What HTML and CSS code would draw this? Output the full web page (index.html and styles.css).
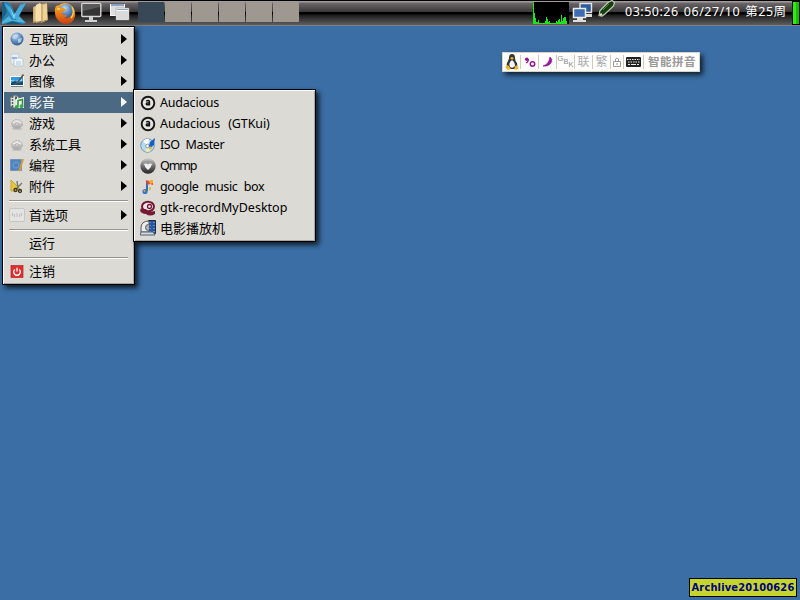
FILE: index.html
```
<!DOCTYPE html>
<html lang="zh-CN">
<head>
<meta charset="utf-8">
<title>Archlive</title>
<link rel="stylesheet" href="styles.css">
</head>
<body>
<svg width="0" height="0" class="defs">
  <defs>
    <linearGradient id="folder" x1="0" x2="1"><stop offset="0" stop-color="#c9a05d"/><stop offset=".5" stop-color="#f4dca8"/><stop offset="1" stop-color="#d2ab6b"/></linearGradient>
    <radialGradient id="globe" cx=".4" cy=".3" r=".8"><stop offset="0" stop-color="#c4dcf4"/><stop offset=".5" stop-color="#5f8dc0"/><stop offset="1" stop-color="#254d82"/></radialGradient>
    <linearGradient id="fox" x1="0" y1="0" x2="0" y2="1"><stop offset="0" stop-color="#f5b227"/><stop offset=".5" stop-color="#ea7418"/><stop offset="1" stop-color="#c23f12"/></linearGradient>
    <linearGradient id="ball" x1="0" y1="0" x2="0" y2="1"><stop offset="0" stop-color="#ccc"/><stop offset=".45" stop-color="#777"/><stop offset="1" stop-color="#222"/></linearGradient>
    <linearGradient id="steel" x1="0" y1="0" x2="0" y2="1"><stop offset="0" stop-color="#e2e2e0"/><stop offset="1" stop-color="#a4a4a2"/></linearGradient>
    <symbol id="gear" viewBox="0 0 16 16"><ellipse cx="8" cy="13.500" rx="5" ry="1.500" fill="#c2c1bd"/><ellipse cx="8" cy="9" rx="5.500" ry="4.500" fill="url(#steel)" stroke="#b2b2b0" stroke-dasharray="2 1"/><path d="M4 8q4-3 8 0" stroke="#f2f2f0" fill="none"/><ellipse cx="8" cy="9" rx="1.800" ry="1.200" fill="#dcdad5" stroke="#a5a5a3" stroke-width=".6"/></symbol>
    <symbol id="aud" viewBox="0 0 16 16"><circle cx="8" cy="8" r="6.300" fill="#e5e5e1" stroke="#191919" stroke-width="1.900"/><path d="M6.200 6.200q2-1.300 3.200 0v4.400M9.400 8q-3.200-.5-3.100 1.100.6 1.300 3.100.1" fill="none" stroke="#111" stroke-width="1.500"/></symbol>
  </defs>
</svg>
<header class="panel">
  <div class="launchers">
    <svg width="24" height="22" viewBox="0 0 24 22"><path d="M0 0h6l3 3 4 8L19 2l5-1-6 11-1 3 6 7H0z" fill="#2a83b3"/><path d="M0 0h2l3 10-5 8z" fill="#1d5f85"/><path d="M2 1l6 4 4 8 6-10 6-2-9 16h-4z" fill="#43abdc"/><path d="M8 5l4 8 2-2-2 6z" fill="#8fd6f2"/><path d="M0 20l7-6 3 4 4 0 3-4 7 7-8-1-7-1-9 3z" fill="#4fb3dc"/><path d="M3 22l8-3 9 3z" fill="#1c5a7e"/></svg>
    <svg width="18" height="22" viewBox="0 0 18 22"><path d="M2 5l3-1 4-3v17l-7 3z" fill="url(#folder)"/><path d="M10 2l6-1 1 17-7 3z" fill="#d3ae6c"/><path d="M5 3l4-2 1 1v17l-5 2z" fill="#f4dfae"/><path d="M12 3l4-1v16l-4 2z" fill="#ecd19a"/><path d="M2 20h8l6-2" stroke="#ab854a" fill="none"/></svg>
    <svg width="22" height="22" viewBox="0 0 22 22"><circle cx="11" cy="11" r="10" fill="url(#fox)"/><circle cx="12" cy="9" r="7" fill="url(#globe)"/><path d="M1 10Q0 5 4 3l1 3 5 0 2 2-4 2q0 4 5 3 0 3-4 3 6 4 10-2 2-4 0-8 4 5 1 11-4 6-10 5Q3 20 1 10z" fill="url(#fox)"/><path d="M3 7l3 0M18 5q3 6-1 11" stroke="#f9d64b" fill="none" stroke-width="1.3"/></svg>
    <svg width="22" height="22" viewBox="0 0 22 22"><rect x=".8" y="1.500" width="19" height="13" rx="1" fill="#353535" stroke="#d7d7d7" stroke-width="1.400"/><path d="M2 2h17v3L2 9z" fill="#595959"/><path d="M8 15h4v3h4v2H4v-2h4z" fill="#d0d0d0"/></svg>
    <svg width="22" height="22" viewBox="0 0 22 22"><path d="M1 2h15v12H1z" fill="#fafafa"/><path d="M2 3h13" stroke="#6285b8" stroke-width="1.500"/><path d="M2 4h13v9H2z" fill="#dedede"/><path d="M7 6h13v12H7z" fill="#fafafa" stroke="#999" stroke-width=".6"/><path d="M8 7.500h11" stroke="#8ba3c4"/><path d="M8 9h11v8H8z" fill="#dadada"/></svg>
  </div>
  <div class="pager"><i class="desk on"></i><i class="desk"></i><i class="desk"></i><i class="desk"></i><i class="desk"></i><i class="desk"></i></div>
  <div class="tray">
    <svg class="cpu" width="36" height="22" viewBox="0 0 36 22"><rect width="36" height="22" fill="#000"/><path d="M0 22V0h1v11h1v5h1v4h2v-2h1v3h6v-2h1v-4h1v2h1v3h1v-1h1v2h6v-2h1v1h1v-2h1v-1h1v3h1v-7h1v6h1v-3h1v-1h2v4h1v3z" fill="#1be51b"/></svg>
    <svg class="net" width="22" height="22" viewBox="0 0 22 22"><path d="M8 1.500h11.500v9H8z" fill="#2f5c9e" stroke="#e6e6df" stroke-width="1.400"/><path d="M13 12h7v3h-7z" fill="#ddd"/><path d="M1.500 6.500h12v9h-12z" fill="#3d6cb0" stroke="#eeeee6" stroke-width="1.500"/><path d="M5 16h6v2h3v2H1v-2h4z" fill="#ddd"/></svg>
    <svg class="pen" width="18" height="18" viewBox="0 0 18 18"><path d="M1 15.500l1-5L10 2.500l4-2 2.500 2-1 3.500-8.500 8-3 2z" fill="#123f0d" stroke="#c8c8b8" stroke-width="1.200"/><path d="M5 10l6-6" stroke="#4d8a34"/><path d="M2 15l2-1" stroke="#e0e0cc" stroke-width="2"/></svg>
    <span class="clock">03:50:26 06/27/10 第25周</span>
    <i class="battery"></i>
  </div>
</header>

<nav class="menu main-menu">
  <div class="item"><svg viewBox="0 0 16 16"><circle cx="8" cy="8" r="6.500" fill="url(#globe)"/><path d="M4 4l4-1 1 2-3 3-3-1zM9 8l4-1-1 4-3 1z" fill="#c7d9ea" opacity=".8"/></svg><span>互联网</span><b></b></div>
  <div class="item"><svg viewBox="0 0 16 16"><path d="M2 2h8v10H2z" fill="#e5edf5" stroke="#c2cfdb"/><path d="M5 6h8l1 1v7H5z" fill="#f4f7fa" stroke="#b9c8d6"/><path d="M3 5h5v2H3z" fill="#91b8dc"/><path d="M7 10h5M7 12h5" stroke="#aac4dc"/></svg><span>办公</span><b></b></div>
  <div class="item"><svg viewBox="0 0 16 16"><path d="M1.500 3.500h13v9h-13z" fill="#329be0" stroke="#fff"/><path d="M2 7l5 1 6-2v2H2z" fill="#a8dcf5"/><path d="M2 10l4-2 3 2 5-2v4H2z" fill="#174d68"/><path d="M14.500 1.500L9 9l-3 2.500" stroke="#555" stroke-width="1.600" fill="none"/><path d="M2 13.500h12" stroke="#6c8590"/></svg><span>图像</span><b></b></div>
  <div class="item active"><svg viewBox="0 0 16 16"><path d="M1.500 4q4-4 8-1v10q-4 2-8-1z" fill="#dfe6df" stroke="#8b9690"/><path d="M3.500 2v12" stroke="#56665a" stroke-width="1.500" stroke-dasharray="2 1"/><path d="M6 2.500h2v3H6z" fill="#46604d"/><path d="M7 5l8-2v11H7z" fill="#eef3ed"/><path d="M9 12.500V6.500l4.500-1V12" stroke="#27913b" stroke-width="1.500" fill="none"/><circle cx="7.800" cy="12.800" r="1.900" fill="#37a947"/><circle cx="12.500" cy="12.200" r="1.900" fill="#37a947"/></svg><span>影音</span><b></b></div>
  <div class="item"><svg><use href="#gear"/></svg><span>游戏</span><b></b></div>
  <div class="item"><svg><use href="#gear"/></svg><span>系统工具</span><b></b></div>
  <div class="item"><svg viewBox="0 0 16 16"><path d="M1.500 2.500h11v11h-11z" fill="#5185c2" stroke="#7192bb"/><circle cx="7" cy="8" r="3" fill="none" stroke="#6d9bd0"/><path d="M14 2l-3 10-1 2" stroke="#d99b32" stroke-width="2" fill="none"/></svg><span>编程</span><b></b></div>
  <div class="item"><svg viewBox="0 0 16 16"><path d="M2 2l11 11H2z" fill="#e8c638" stroke="#c9a526"/><path d="M8 3l1 8M13 5l-6 6" stroke="#777" stroke-width="1.4"/><circle cx="6.500" cy="12" r="1.500" fill="none" stroke="#333" stroke-width="1.300"/><circle cx="11" cy="13" r="1.500" fill="none" stroke="#333" stroke-width="1.300"/></svg><span>附件</span><b></b></div>
  <hr class="sep first">
  <div class="item"><svg viewBox="0 0 16 16"><rect x=".5" y="1.500" width="15" height="13" rx="1.500" fill="#e3e3e1" stroke="#c6c6c2"/><path d="M3.500 6v3M5.500 7v3M8 6v4M10.500 7v3M12.500 6v3" stroke="#bdbdb9"/></svg><span>首选项</span><b></b></div>
  <hr class="sep">
  <div class="item"><svg></svg><span>运行</span></div>
  <hr class="sep">
  <div class="item"><svg viewBox="0 0 16 16"><rect x="2" y="2.500" width="12" height="12" fill="#dc3030" stroke="#bd2020" stroke-width=".7"/><path d="M5.800 6.500a3.300 3.300 0 1 0 4.400 0M8 4.700V8.500" fill="none" stroke="#fff" stroke-width="1.300"/></svg><span>注销</span></div>
</nav>

<nav class="menu sub-menu">
  <div class="item"><svg><use href="#aud"/></svg><span class="audacious">Audacious</span></div>
  <div class="item"><svg><use href="#aud"/></svg><span class="gtkui">Audacious (GTKui)</span></div>
  <div class="item"><svg viewBox="0 0 16 16"><circle cx="7.500" cy="8.500" r="6.800" fill="#b8d9ed" stroke="#7895aa"/><path d="M8 9L3 4q3-3 6-2z" fill="#fff"/><path d="M8 9l3 5q-4 2-6 0z" fill="#e5edba"/><circle cx="7.500" cy="9" r="1.800" fill="#fff" stroke="#89a"/><path d="M15 1l-1 7-4 3-1-2 1-4z" fill="#1560c2"/><path d="M10 9l2 2-3 2z" fill="#ecac20"/></svg><span class="iso">ISO Master</span></div>
  <div class="item"><svg viewBox="0 0 16 16"><circle cx="8" cy="8" r="7.700" fill="url(#ball)"/><path d="M2 5q6-4 12 0l-2 2H4z" fill="#999"/><path d="M4 6l2-.5 2 1 2-1 2 .5-1.500 3.500L8 12 5.500 9.500z" fill="#f1f1f1"/></svg><span class="qmmp">Qmmp</span></div>
  <div class="item"><svg viewBox="0 0 16 16"><path d="M7 12V2" stroke="#2b6fc4" stroke-width="2"/><path d="M6 1l3 1 4-1v5l-3-1-3 1z" fill="#e6482e"/><path d="M9 2l4-1v3l-3 1z" fill="#f3b62b"/><circle cx="5" cy="12.500" r="2.600" fill="#3475ca"/><circle cx="4.500" cy="12" r="1" fill="#eea127"/><path d="M9 8h2v3H9z" fill="#e8bd36"/></svg><span class="google">google music box</span></div>
  <div class="item"><svg viewBox="0 0 16 16"><ellipse cx="8" cy="6.500" rx="6" ry="4.800" fill="#eee3e5" stroke="#751a35" stroke-width="2"/><circle cx="9.500" cy="6.500" r="2" fill="#eee" stroke="#751a35" stroke-width="1.300"/><path d="M1 8q1 2 5 1l3 3 6-1v3q-5 3-9 0-4 0-6-3z" fill="#751a35"/></svg><span class="record">gtk-recordMyDesktop</span></div>
  <div class="item"><svg viewBox="0 0 16 16"><path d="M8.500.5h7v13h-7z" fill="#2458a5" stroke="#222b3c"/><path d="M10 2v11M14 2v11" stroke="#a9c4e8" stroke-dasharray="1 2"/><path d="M9 1Q1 1 1 8v4h8z" fill="#eee" stroke="#555"/><path d="M8.500 4.500q-3 0-3 3t3 3" fill="#bbb" stroke="#555"/><path d="M1 12h12l2 3H0z" fill="#d4d8df" stroke="#536077"/></svg><span>电影播放机</span></div>
</nav>

<div class="ime">
  <span class="cell"><svg width="14" height="16" viewBox="0 0 14 16"><path d="M4 4q0-4 3-4t3 4q0 3 2 5 1 4-1 6H3Q1 12 2 9q2-3 2-5z" fill="#333"/><path d="M7 6q3 2 3 6-2 3-5 1-2-4 2-7z" fill="#f5f5f5"/><path d="M5 4l2-1 2 1-2 2zM0 13l3-2 3 4-3 1zM9 15l2-4 3 3-3 2z" fill="#e9b822"/></svg></span>
  <span class="cell"><svg width="12" height="12" viewBox="0 0 12 12"><circle cx="2.800" cy="3.300" r="1.800" fill="#92178f"/><path d="M4.500 3q0 3-2.500 4" stroke="#92178f" stroke-width="1.200" fill="none"/><circle cx="8.500" cy="8" r="2.200" stroke="#92178f" stroke-width="1.500" fill="none"/></svg></span>
  <span class="cell"><svg width="12" height="12" viewBox="0 0 12 12"><path d="M8 1q3 2 1 6-3 4-8 3 6-2 7-9z" fill="#a01aa4" stroke="#7c1486" stroke-width=".6"/></svg></span>
  <span class="cell gbk"><i>G</i><i>B</i><i>K</i></span>
  <span class="cell">联</span><span class="cell">繁</span>
  <span class="cell lock"><svg width="8" height="11" viewBox="0 0 8 11"><path d="M2.500 4V2q1.500-2 3 0v2M.5 4.500h7v5h-7zM3 7h2" fill="none" stroke="#999"/></svg></span>
  <span class="cell"><svg width="15" height="10" viewBox="0 0 15 10"><rect width="15" height="10" rx="1" fill="#222"/><path d="M1 2.500h13M2 5h12" stroke="#eee" stroke-width="1" stroke-dasharray="1.500 1"/><path d="M2 7.500h2M5 7.500h5M11 7.500h2" stroke="#eee"/></svg></span>
  <strong>智能拼音</strong>
</div>
<div class="version">Archlive20100626</div>
</body>
</html>
```

FILE: styles.css
```
* { box-sizing: border-box; }
body { margin: 0; width: 800px; height: 600px; overflow: hidden; background: #3a6ea5; position: relative; font: 13px/20px "Noto Sans", "Noto Sans CJK SC", sans-serif; color: #000; }
svg { display: block; flex: none; }
.defs { position: absolute; }

.panel { display: flex; height: 26px; padding-top: 1px; border-top: 1px solid #000; border-bottom: 1px solid #827f80; background: linear-gradient(#a09a9d 0 1px, #6c686a 2px, #383637 11px, #000 11px, #000 13px, #1c1c1c 14px, #5f5e5f 24px); }
.launchers { display: flex; width: 138px; padding-left: 2px; gap: 5px; }
.launchers svg:nth-child(5) { margin-left: 1px; }
.pager { display: flex; gap: 1px; height: 20px; }
.desk { width: 26px; background: #9e9890; }
.desk.on { background: #394856; }
.tray { display: flex; margin-left: auto; color: #fff; }
.net { margin-left: 3px; }
.pen { margin: -2px 0 0 4px; }
.clock { width: 162px; margin-left: 9px; white-space: pre; letter-spacing: .5px; word-spacing: 1.500px; font-size: 12.5px; }
.battery { width: 8px; height: 24px; margin: -1px 0 0 5px; background: linear-gradient(90deg, #2cf00c 3px, #18bd08 3px); border: 1px solid #000; }

.menu { position: absolute; background: #dcdad5; border: 1px solid #000; padding: 2px 1px; box-shadow: inset 1px 1px #fff, inset -1px -1px #aaa7a1, 3px 3px 5px rgba(0,0,0,.75); }
.main-menu { left: 2px; top: 26px; width: 133px; height: 259px; }
.sub-menu { left: 133px; top: 89px; width: 183px; height: 153px; }
.item { display: flex; align-items: center; height: 21px; padding: 0 6px 0 5px; white-space: pre; }
.main-menu .item { padding-bottom: 2px; }
.item svg { width: 16px; height: 16px; margin-right: 4px; }
.sub-menu .item { font-size: 12.5px; }
.sub-menu .item:last-child { font-size: 13px; padding-bottom: 2px; }
.audacious { letter-spacing: -.2px; }
.gtkui { letter-spacing: -.1px; word-spacing: 5px; }
.iso { letter-spacing: -.4px; word-spacing: 3px; }
.qmmp { letter-spacing: -1.1px; }
.google { letter-spacing: -.4px; word-spacing: 3.500px; }
.item b { margin-left: auto; border-left: 6px solid #000; border-top: 5.5px solid transparent; border-bottom: 5.5px solid transparent; }
.active { color: #fff; background: #4b6983; }
.active b { border-left-color: #fff; }
.sep { height: 2px; border: 0; border-top: 1px solid #96948f; border-bottom: 1px solid #fff; margin: 3px 5px 2px; }
.sep.first { margin-bottom: 3px; }

.ime { position: absolute; left: 502px; top: 52px; width: 198px; height: 20px; display: flex; align-items: center; background: #fff; border: 1px solid #d8d5c6; color: #aaa; font-size: 12px; line-height: 18px; box-shadow: 3px 3px 5px rgba(0,0,0,.7); }
.cell { width: 18px; height: 14px; display: flex; justify-content: center; align-items: center; border-right: 1px solid #cfccb5; flex: none; }
.lock { width: 13px; }
.cell:nth-child(8) { width: 20px; }
.gbk i { font: 7.500px/8px "Liberation Sans", sans-serif; color: #888; }
.gbk i:nth-child(1) { margin-top: -6px; }
.gbk i:nth-child(3) { margin-top: 6px; }
.ime strong { margin-left: 4px; font-size: 11.5px; letter-spacing: .5px; color: #999; white-space: nowrap; }

.version { position: absolute; left: 689px; top: 578px; width: 108px; height: 19px; border: 1px solid #000; background: #c5d52d; color: #000080; font: bold 11px/17px "DejaVu Sans Condensed", "DejaVu Sans", sans-serif; font-stretch: condensed; letter-spacing: .15px; text-align: center; }
```
